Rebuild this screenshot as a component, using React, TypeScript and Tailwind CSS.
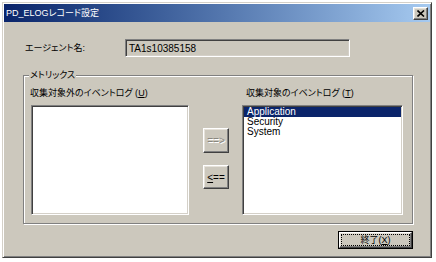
import React from 'react';

const font = "font-['Liberation_Sans','Noto_Sans_CJK_JP',sans-serif]";
const palt = "[font-feature-settings:'palt']";
const raised =
  'border border-t-white border-l-white border-r-[#404040] border-b-[#404040] shadow-[inset_-1px_-1px_0_#808080,inset_1px_1px_0_#e6e2da]';
const sunken =
  'border border-t-[#808080] border-l-[#808080] border-r-white border-b-white shadow-[inset_1px_1px_0_#404040,inset_-1px_-1px_0_#d4d0c8]';

const collected = ['Application', 'Security', 'System'];

function ListBox({ items, selected }: { items: string[]; selected?: number }) {
  return (
    <div className={`h-[110px] bg-white p-[1px] ${sunken}`}>
      {items.map((item, i) => (
        <div
          key={item}
          className={`h-[10px] pl-[3px] text-[10px] leading-[10px] ${
            i === selected ? 'bg-[#0a246a] text-white' : 'text-black'
          }`}
        >
          {item}
        </div>
      ))}
    </div>
  );
}

export default function App() {
  return (
    <div className={`w-[436px] h-[262px] bg-white p-[2px] text-black ${font}`}>
      <div className="w-[430px] h-[256px] bg-[#ccc8bd] border border-t-[#d4d0c8] border-l-[#d4d0c8] border-r-[#404040] border-b-[#404040] shadow-[inset_1px_1px_0_#fff,inset_-1px_-1px_0_#808080] p-[1px] flex flex-col">
        {/* title bar */}
        <div className="h-[18px] flex items-center justify-between pl-[2px] pr-[2px] bg-linear-to-r from-[#0a246a] to-[#a6caf0]">
          <span className={`text-[9px] leading-[12px] text-white ${palt}`}>PD_ELOGレコード設定</span>
          <button className={`w-[15px] h-[13px] bg-[#ccc8bd] flex items-center justify-center ${raised}`}>
            <svg width="8" height="7" viewBox="0 0 8 7">
              <path d="M0.5 0.5 L7 6.5 M7 0.5 L0.5 6.5" stroke="#000" strokeWidth="1.6" />
            </svg>
          </button>
        </div>

        <div className="flex flex-col pl-[19px]">
          {/* agent name */}
          <div className="mt-[17px] flex items-center h-[18px]">
            <span className={`w-[102px] pl-[2px] text-[9px] leading-[12px] ${palt}`}>エージェント名:</span>
            <div className={`w-[225px] h-[18px] flex items-center pl-[3px] text-[10px] bg-[#ccc8bd] ${sunken}`}>
              TA1s10385158
            </div>
          </div>

          {/* metrics group */}
          <div className="mt-[18px] w-[390px] h-[149px] border border-[#808080] shadow-[inset_1px_1px_0_#fff,1px_1px_0_#fff] flex flex-col">
            <div className={`-mt-[7px] ml-[5px] w-fit px-[1px] bg-[#ccc8bd] text-[9px] leading-[12px] ${palt}`}>
              メトリックス
            </div>
            <div className="mt-[6px] pl-[7px] flex">
              <div className="w-[158px] flex flex-col">
                <span className={`h-[12px] -ml-[1px] text-[9px] leading-[12px] ${palt}`}>
                  収集対象外のイベントログ (<span className="underline">U</span>)
                </span>
                <div className="mt-[6px]">
                  <ListBox items={[]} />
                </div>
              </div>

              <div className="ml-[14px] w-[26px] flex flex-col pt-[41px]">
                <button
                  className={`h-[25px] bg-[#ccc8bd] text-[10px] text-[#8a877f] [text-shadow:1px_1px_0_#fff] ${raised}`}
                >
                  ==&gt;
                </button>
                <button className={`mt-[12px] h-[24px] bg-[#ccc8bd] text-[10px] ${raised}`}>
                  <span className="underline">&lt;</span>==
                </button>
              </div>

              <div className="ml-[13px] w-[161px] flex flex-col">
                <span className={`h-[12px] pl-[4px] text-[9px] leading-[12px] ${palt}`}>
                  収集対象のイベントログ (<span className="underline">T</span>)
                </span>
                <div className="mt-[6px]">
                  <ListBox items={collected} selected={0} />
                </div>
              </div>
            </div>
          </div>

          {/* close button */}
          <div className="w-[390px] mt-[7px] flex justify-end">
            <button className="w-[75px] h-[18px] border border-black bg-[#ccc8bd]">
              <div className={`w-full h-full p-[1px] flex ${raised}`}>
                <div className={`flex-1 border border-dotted border-black flex items-center justify-center text-[9px] leading-[10px] ${palt}`}>
                  終了(<span className="underline">X</span>)
                </div>
              </div>
            </button>
          </div>
        </div>
      </div>
    </div>
  );
}
